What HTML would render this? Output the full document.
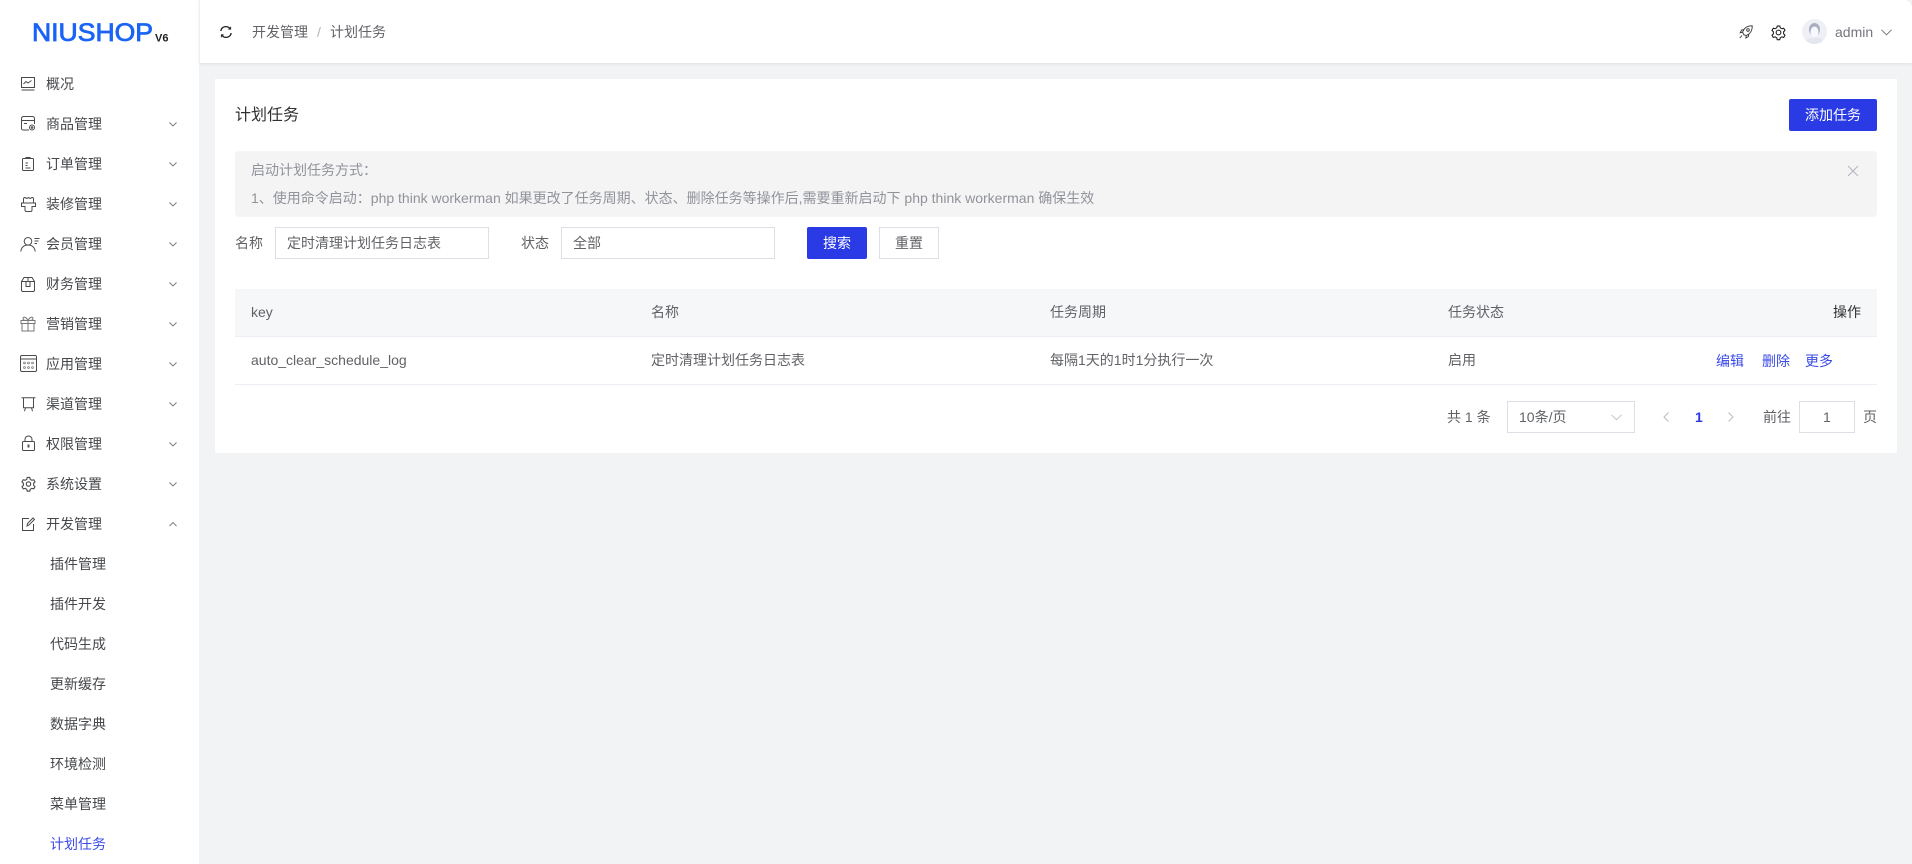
<!DOCTYPE html>
<html lang="zh-CN"><head><meta charset="utf-8"><title>计划任务</title>
<style>
*{box-sizing:border-box}
html,body{margin:0;padding:0;width:1912px;height:864px;overflow:hidden;background:#f1f3f5;font-family:"Liberation Sans","WenQuanYi Zen Hei","Noto Sans CJK SC",sans-serif;font-size:14px;color:#606266}
.t{position:absolute;white-space:nowrap;line-height:20px;height:20px}
.b{position:absolute}
svg{position:absolute;overflow:visible;fill:none;stroke:#4a4a4a;stroke-width:1}
.m{color:#45474b}
.box{position:absolute;background:#fff;border:1px solid #dcdfe6}
</style></head><body>
<div class="b" style="left:0;top:0;width:199px;height:864px;background:#fff"></div>
<div class="b" style="left:199px;top:0;width:1713px;height:63px;background:#fff;border-left:1px solid #edf1f7;border-top-right-radius:8px;box-shadow:0 1px 3px rgba(0,21,41,.08)"></div>

<!-- logo -->
<svg style="left:0;top:0;stroke:none" width="199" height="63"><text x="32" y="41" textLength="121" lengthAdjust="spacingAndGlyphs" font-family="Liberation Sans" font-weight="400" font-size="25" fill="#1a63f5" style="stroke:#1a63f5;stroke-width:.8">NIUSHOP</text><text x="155" y="41.500" font-family="Liberation Sans" font-weight="700" font-size="11" fill="#222">V6</text></svg>

<!-- sidebar icons -->
<svg style="left:21px;top:77px" width="14" height="14" viewBox="0 0 14 14"><rect x=".5" y=".5" width="13" height="10"/><path d="M2.500 7l2.500-2.500 2 1.500 3.500-2.500M.5 13h13"/></svg>
<svg style="left:21px;top:116px" width="15" height="15" viewBox="0 0 15 15"><path d="M8 14H2a1.500 1.500 0 0 1-1.500-1.500v-10A2 2 0 0 1 2.500.5h9a2 2 0 0 1 2 2V8M.5 4.500h13M3 7.500h3"/><circle cx="11" cy="11.500" r="2.500"/><circle cx="11" cy="11.500" r=".8"/></svg>
<svg style="left:22px;top:157px" width="12" height="14" viewBox="0 0 12 14"><rect x=".5" y="1.500" width="11" height="12" rx="1"/><path d="M4 1.500V.5h4v1M3.500 6h2.500M3.500 8.500h2M3.500 11h5"/></svg>
<svg style="left:21px;top:197px" width="15" height="15" viewBox="0 0 15 15"><path d="M2.500 6V2q0-1.500 1.500-1.500l2 1 1.500-1 1.500 1 2-1q1.500 0 1.500 1.500v4M.5 6h14v3.500h-3.500V13q0 1.500-1.500 1.500h-4Q4 14.500 4 13V9.500H.5z"/></svg>
<svg style="left:20px;top:237px" width="20" height="15" viewBox="0 0 20 15"><circle cx="8" cy="4.300" r="3.800"/><path d="M.8 14.500c.3-4 3.200-6.500 7.200-6.500s6.900 2.500 7.200 6.500M14.500 1.500h5M14.500 4h4M14.500 6.500h2.500"/></svg>
<svg style="left:21px;top:277px" width="14" height="15" viewBox="0 0 14 15"><path d="M.5 4.500h13v8.500q0 1.500-1.500 1.500H2Q.5 14.500.5 13zM.5 4.500L3 .5h8l2.500 4M5 4.500v5h4v-5M7 .5v4"/></svg>
<svg style="left:20px;top:316px;stroke:#777" width="16" height="16" viewBox="0 0 16 16"><path d="M1 4.500h14v3H1zM2 7.500v7.500h12V7.500M8 4.500V15M8 4.500C6 .5 3 .5 3 2.500s2 2 5 2zM8 4.500c2-4 5-4 5-2s-2 2-5 2z"/></svg>
<svg style="left:20px;top:355px" width="17" height="17" viewBox="0 0 17 17"><rect x=".5" y=".5" width="16" height="16" rx="1.500"/><path d="M.5 4h16"/><g style="stroke:#777;stroke-width:.8"><circle cx="4.500" cy="8" r=".9"/><circle cx="8.500" cy="8" r=".9"/><circle cx="12.500" cy="8" r=".9"/><circle cx="4.500" cy="12.500" r=".9"/><circle cx="8.500" cy="12.500" r=".9"/><circle cx="12.500" cy="12.500" r=".9"/></g></svg>
<svg style="left:21px;top:397px" width="15" height="15" viewBox="0 0 15 15"><path d="M.5.700h14M2.500.700v10h10V.7M4.500 10.700l-1 3.500M10.500 10.700l1 3.500"/></svg>
<svg style="left:22px;top:436px" width="13" height="15" viewBox="0 0 13 15"><rect x=".5" y="5.500" width="12" height="9" rx="1"/><path d="M3 5.500V3.500a3.500 3.500 0 0 1 7 0v2"/><path d="M6.500 8.500v3" style="stroke-width:2;stroke:#555"/></svg>
<svg style="left:21px;top:476px;stroke-width:1.800" width="15" height="16" viewBox="0 0 24 24"><circle cx="12" cy="12" r="3.500"/><path d="M10 1.500h4l.8 3 2.600 1.500 3-.8 2 3.400-2.200 2.200v3.400l2.200 2.200-2 3.400-3-.8-2.600 1.500-.8 3h-4l-.8-3-2.600-1.500-3 .8-2-3.400 2.200-2.200v-3.400L1.600 8.600l2-3.400 3 .8L9.200 4.500z"/></svg>
<svg style="left:22px;top:517px" width="13" height="14" viewBox="0 0 13 14"><path d="M7 1.500H.5v12h11V7"/><path d="M5 9l.5-2.500L11 1l1.500 1.500L7 8z"/></svg>

<!-- menu -->
<div class="t m" style="left:46px;top:74px">概况</div>
<div class="t m" style="left:46px;top:114px">商品管理</div>
<div class="t m" style="left:46px;top:154px">订单管理</div>
<div class="t m" style="left:46px;top:194px">装修管理</div>
<div class="t m" style="left:46px;top:234px">会员管理</div>
<div class="t m" style="left:46px;top:274px">财务管理</div>
<div class="t m" style="left:46px;top:314px">营销管理</div>
<div class="t m" style="left:46px;top:354px">应用管理</div>
<div class="t m" style="left:46px;top:394px">渠道管理</div>
<div class="t m" style="left:46px;top:434px">权限管理</div>
<div class="t m" style="left:46px;top:474px">系统设置</div>
<div class="t m" style="left:46px;top:514px">开发管理</div>
<div class="t m" style="left:50px;top:554px">插件管理</div>
<div class="t m" style="left:50px;top:594px">插件开发</div>
<div class="t m" style="left:50px;top:634px">代码生成</div>
<div class="t m" style="left:50px;top:674px">更新缓存</div>
<div class="t m" style="left:50px;top:714px">数据字典</div>
<div class="t m" style="left:50px;top:754px">环境检测</div>
<div class="t m" style="left:50px;top:794px">菜单管理</div>
<div class="t" style="left:50px;top:834px;color:#3a4ae8">计划任务</div>

<svg style="left:169px;top:122px;stroke:#777;stroke-width:.9" width="8" height="368" viewBox="0 0 8 368"><path d="M.5.500L4 4l3.500-3.500M.5 40.500L4 44l3.500-3.500M.5 80.500L4 84l3.500-3.500M.5 120.500L4 124l3.500-3.500M.5 160.500L4 164l3.500-3.500M.5 200.500L4 204l3.500-3.500M.5 240.500L4 244l3.500-3.500M.5 280.500L4 284l3.500-3.500M.5 320.500L4 324l3.500-3.500M.5 360.500L4 364l3.500-3.500"/></svg>
<svg style="left:169px;top:522px;stroke:#777;stroke-width:.9" width="8" height="5" viewBox="0 0 8 5"><path d="M.5 4L4 .5 7.500 4"/></svg>

<!-- header -->
<svg style="left:220px;top:26px;stroke:#222;stroke-width:1.300" width="12" height="12" viewBox="0 0 12 12"><path d="M.8 5A5.200 5.200 0 0 1 10 2.600M11.200 7A5.200 5.200 0 0 1 2 9.400"/><path d="M10.600.8v2.300H8.300M1.400 11.200V8.900h2.300" style="stroke-width:1"/></svg>
<div class="t" style="left:252px;top:22px">开发管理</div>
<div class="t" style="left:317px;top:22px;color:#b0b3b8">/</div>
<div class="t" style="left:330px;top:22px">计划任务</div>
<svg style="left:1739px;top:25px;stroke:#333;stroke-width:.9" width="14" height="14" viewBox="0 0 14 14"><path d="M4.800 9.700L3.600 7.200C5 3 8.500.7 13.200.8c.2 4.700-2 8-6 9.700zM3.600 7.200l-2.400.5L2.600 5l2.400-.4M7.200 10.500l-.3 2.500L9.400 11.500 9.800 9M3 10.500L.8 13"/><circle cx="9" cy="5" r="1.300"/></svg>
<svg style="left:1771px;top:25px;stroke:#111;stroke-width:1.600" width="15" height="15" viewBox="0 0 24 24"><circle cx="12" cy="12" r="3.800"/><path d="M10 1.500h4l.8 3 2.600 1.500 3-.8 2 3.400-2.200 2.200v3.400l2.200 2.200-2 3.400-3-.8-2.600 1.500-.8 3h-4l-.8-3-2.600-1.500-3 .8-2-3.400 2.200-2.200v-3.400L1.600 8.600l2-3.400 3 .8L9.200 4.500z"/></svg>
<svg style="left:1802px;top:19px;stroke:none" width="25" height="25" viewBox="0 0 25 25"><defs><clipPath id="c"><circle cx="12.500" cy="12.500" r="12.500"/></clipPath></defs><g clip-path="url(#c)"><rect width="25" height="25" fill="#eff0f6"/><ellipse cx="12.500" cy="10.500" rx="5.500" ry="6.500" fill="#a9aebf"/><ellipse cx="12.500" cy="13" rx="4" ry="5.500" fill="#f7f8fb"/><path d="M3 25c0-5 5-6.500 9.500-6.500s9.500 1.500 9.500 6.500z" fill="#e4e6ef"/></g></svg>
<div class="t" style="left:1835px;top:22px;color:#74767c">admin</div>
<svg style="left:1881px;top:29px;stroke:#777" width="11" height="7" viewBox="0 0 11 7"><path d="M.5.800l5 5 5-5"/></svg>

<!-- card -->
<div class="b" style="left:215px;top:79px;width:1682px;height:374px;background:#fff"></div>
<div class="t" style="left:235px;top:106px;font-size:16px;color:#303133">计划任务</div>
<div class="b" style="left:1789px;top:99px;width:88px;height:32px;background:#2a3be6;border-radius:2px"></div>
<div class="t" style="left:1805px;top:105px;color:#fff">添加任务</div>

<div class="b" style="left:235px;top:151px;width:1642px;height:66px;background:#f4f4f5;border-radius:4px"></div>
<div class="t" style="left:251px;top:160px;color:#909399">启动计划任务方式：</div>
<div class="t" style="left:251px;top:188px;color:#909399">1、使用命令启动：php think workerman 如果更改了任务周期、状态、删除任务等操作后,需要重新启动下 php think workerman 确保生效</div>
<svg style="left:1848px;top:166px;stroke:#b0b3b8" width="10" height="10" viewBox="0 0 10 10"><path d="M0 0l10 10M10 0L0 10"/></svg>

<div class="t" style="left:235px;top:233px">名称</div>
<div class="box" style="left:275px;top:227px;width:214px;height:32px"></div>
<div class="t" style="left:287px;top:233px">定时清理计划任务日志表</div>
<div class="t" style="left:521px;top:233px">状态</div>
<div class="box" style="left:561px;top:227px;width:214px;height:32px"></div>
<div class="t" style="left:573px;top:233px">全部</div>
<div class="b" style="left:807px;top:227px;width:60px;height:32px;background:#2a3be6;border-radius:2px"></div>
<div class="t" style="left:823px;top:233px;color:#fff">搜索</div>
<div class="box" style="left:879px;top:227px;width:60px;height:32px"></div>
<div class="t" style="left:895px;top:233px">重置</div>

<div class="b" style="left:235px;top:289px;width:1642px;height:48px;background:#f5f7f9;border-bottom:1px solid #ebeef5"></div>
<div class="b" style="left:235px;top:384px;width:1642px;height:1px;background:#ebeef5"></div>
<div class="t" style="left:251px;top:302px">key</div>
<div class="t" style="left:651px;top:302px">名称</div>
<div class="t" style="left:1050px;top:302px">任务周期</div>
<div class="t" style="left:1448px;top:302px">任务状态</div>
<div class="t" style="left:1833px;top:302px;color:#303133">操作</div>
<div class="t" style="left:251px;top:350px">auto_clear_schedule_log</div>
<div class="t" style="left:651px;top:350px">定时清理计划任务日志表</div>
<div class="t" style="left:1050px;top:350px">每隔1天的1时1分执行一次</div>
<div class="t" style="left:1448px;top:350px">启用</div>
<div class="t" style="left:1716px;top:351px;color:#3a4ae8">编辑</div>
<div class="t" style="left:1762px;top:351px;color:#3a4ae8">删除</div>
<div class="t" style="left:1805px;top:351px;color:#3a4ae8">更多</div>

<div class="t" style="left:1447px;top:407px">共 1 条</div>
<div class="box" style="left:1507px;top:401px;width:128px;height:32px"></div>
<div class="t" style="left:1519px;top:407px">10条/页</div>
<svg style="left:1611px;top:414px;stroke:#c0c4cc" width="11" height="7" viewBox="0 0 11 7"><path d="M.5.800l5 5 5-5"/></svg>
<svg style="left:1663px;top:412px;stroke:#b8bbc2" width="6" height="10" viewBox="0 0 6 10"><path d="M5.500.500L1 5l4.500 4.500"/></svg>
<div class="t" style="left:1695px;top:407px;color:#2a3be6;font-weight:700">1</div>
<svg style="left:1728px;top:412px;stroke:#b8bbc2" width="6" height="10" viewBox="0 0 6 10"><path d="M.5.500L5 5 .5 9.500"/></svg>
<div class="t" style="left:1763px;top:407px">前往</div>
<div class="box" style="left:1799px;top:401px;width:56px;height:32px"></div>
<div class="t" style="left:1823px;top:407px">1</div>
<div class="t" style="left:1863px;top:407px">页</div>
</body></html>
